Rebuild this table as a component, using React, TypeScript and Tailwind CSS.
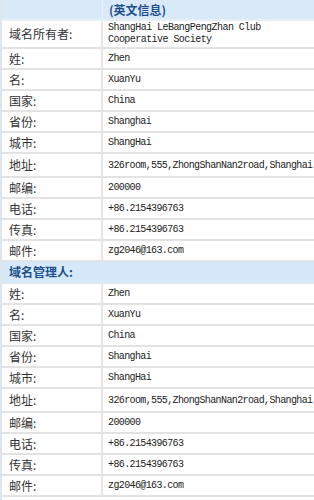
import React from "react";

interface Row {
  label: string;
  value: string;
  tall?: boolean;
}

const owner: Row[] = [
  { label: "姓:", value: "Zhen" },
  { label: "名:", value: "XuanYu" },
  { label: "国家:", value: "China" },
  { label: "省份:", value: "Shanghai" },
  { label: "城市:", value: "ShangHai" },
  { label: "地址:", value: "326room,555,ZhongShanNan2road,Shanghai", tall: true },
  { label: "邮编:", value: "200000" },
  { label: "电话:", value: "+86.2154396763" },
  { label: "传真:", value: "+86.2154396763" },
  { label: "邮件:", value: "zg2046@163.com" },
];

const InfoRow = ({ label, value, tall }: Row) => (
  <div
    className={`grid grid-cols-[101px_1fr] border-b-2 border-[#e3e3e3] ${
      tall ? "h-[24px]" : "h-[21px]"
    }`}
  >
    <div className="flex items-center border-r-2 border-[#e6e6e6] pl-[7px] text-[12px] text-[#333] font-['Noto_Sans_CJK_SC',sans-serif]">
      {label}
    </div>
    <div className="flex items-center overflow-hidden whitespace-nowrap pl-[5px] text-[10px] tracking-[-0.62px] text-[#222] font-['Liberation_Mono',monospace]">
      {value}
    </div>
  </div>
);

export default function App() {
  return (
    <div className="w-[314px] h-[500px] overflow-hidden bg-white border-l-2 border-[#dde6ef]">
      <div className="grid grid-cols-[101px_1fr] h-[21px] bg-[#dae9f8] border-b-2 border-[#e6eef6]">
        <div className="border-r border-[#e8f0f8]" />
        <div className="flex items-center pl-[6px] text-[12px] font-bold text-[#1d4f8c] font-['Noto_Sans_CJK_SC',sans-serif]">
          (英文信息)
        </div>
      </div>
      <div className="grid grid-cols-[101px_1fr] h-[28px] border-b-2 border-[#e3e3e3]">
        <div className="flex items-center border-r-2 border-[#e6e6e6] pl-[7px] text-[12px] text-[#333] font-['Noto_Sans_CJK_SC',sans-serif]">
          域名所有者:
        </div>
        <div className="flex flex-col justify-center pl-[5px] text-[10px] leading-[12px] tracking-[-0.55px] text-[#222] font-['Liberation_Mono',monospace]">
          <span>ShangHai LeBangPengZhan Club</span>
          <span>Cooperative Society</span>
        </div>
      </div>
      {owner.map((r, i) => (
        <InfoRow key={"o" + i} {...r} />
      ))}
      <div className="flex items-center h-[22px] bg-[#d5e9fb] border-b-2 border-[#e0e8f0] pl-[7px] text-[12px] font-bold text-[#1d4f8c] font-['Noto_Sans_CJK_SC',sans-serif]">
        域名管理人:
      </div>
      {owner.map((r, i) => (
        <InfoRow key={"a" + i} {...r} />
      ))}
    </div>
  );
}
